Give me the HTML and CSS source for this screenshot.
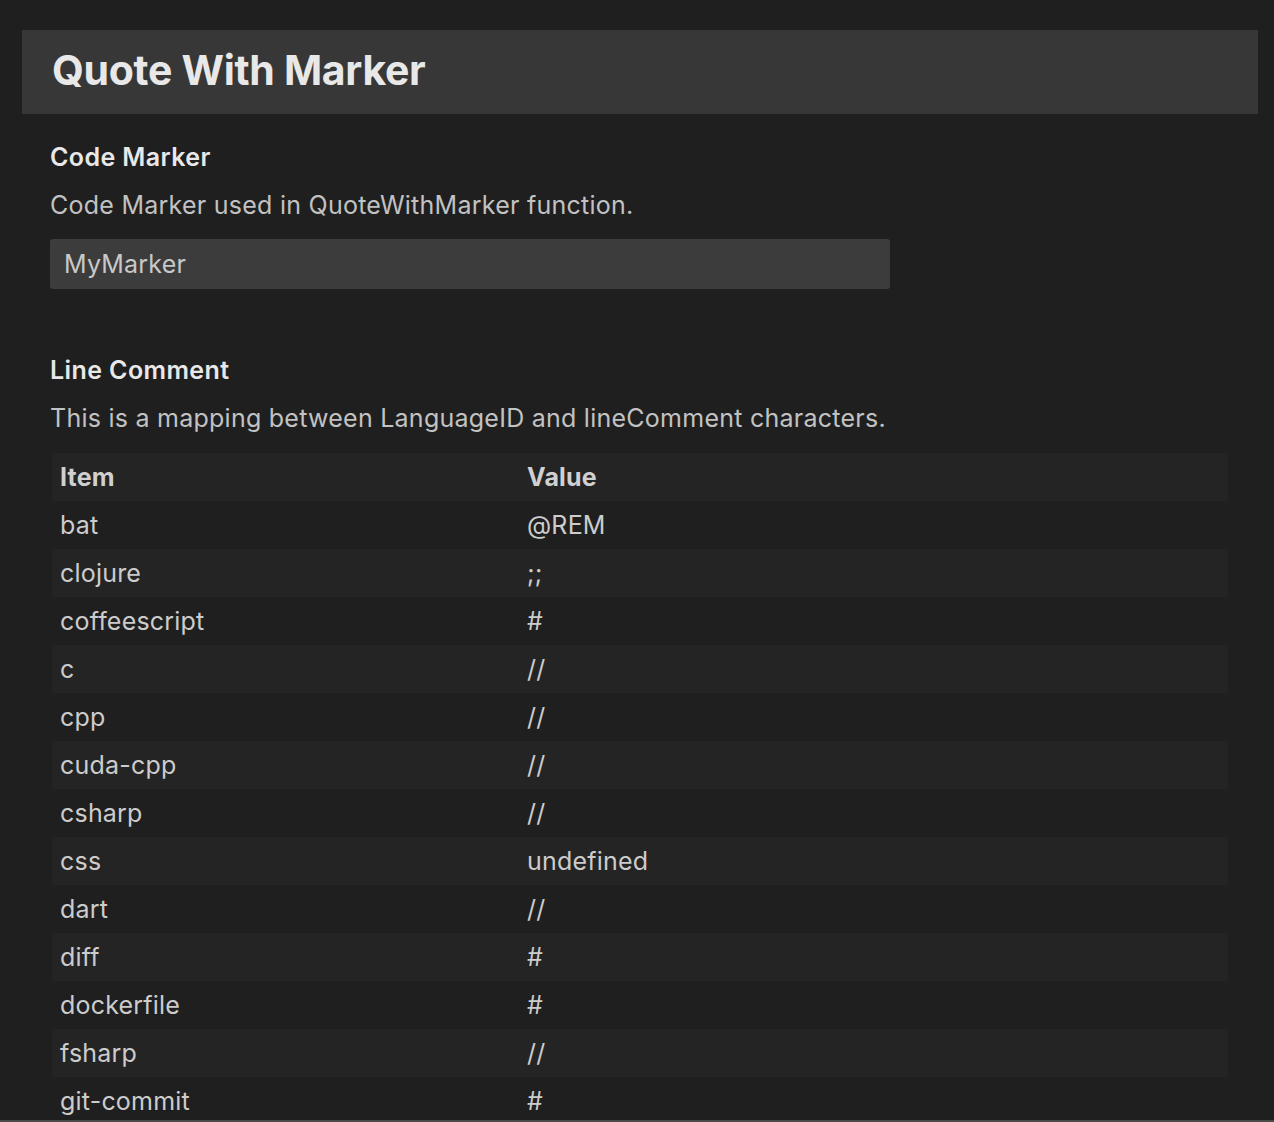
FILE: index.html
```html
<!DOCTYPE html>
<html>
<head>
<meta charset="utf-8">
<link rel="stylesheet" href="styles.css">
</head>
<body>
<div class="page">
  <header class="title-bar"><h1 class="title">Quote With Marker</h1></header>
  <section class="setting">
    <h2 class="setting-name">Code Marker</h2>
    <p class="setting-desc">Code Marker used in QuoteWithMarker function.</p>
    <div class="input">MyMarker</div>
  </section>
  <section class="setting second">
    <h2 class="setting-name">Line Comment</h2>
    <p class="setting-desc">This is a mapping between LanguageID and lineComment characters.</p>
    <table class="map">
      <thead><tr><th class="col-item">Item</th><th>Value</th></tr></thead>
      <tbody>
        <tr><td>bat</td><td>@REM</td></tr>
        <tr><td>clojure</td><td>;;</td></tr>
        <tr><td>coffeescript</td><td>#</td></tr>
        <tr><td>c</td><td>//</td></tr>
        <tr><td>cpp</td><td>//</td></tr>
        <tr><td>cuda-cpp</td><td>//</td></tr>
        <tr><td>csharp</td><td>//</td></tr>
        <tr><td>css</td><td>undefined</td></tr>
        <tr><td>dart</td><td>//</td></tr>
        <tr><td>diff</td><td>#</td></tr>
        <tr><td>dockerfile</td><td>#</td></tr>
        <tr><td>fsharp</td><td>//</td></tr>
        <tr><td>git-commit</td><td>#</td></tr>
      </tbody>
    </table>
  </section>
</div>
<div class="bottom-edge"></div>
</body>
</html>
```
FILE: styles.css
```css
html, body {
  margin: 0;
  padding: 0;
  background: #1f1f1f;
}
body {
  font-family: Inter, "Noto Sans", sans-serif;
  color: #cccccc;
  height: 1122px;
  overflow: hidden;
}
.page {
  padding: 30px 16px 0 22px;
}
.title-bar {
  background: #373737;
  height: 84px;
  display: flex;
  align-items: center;
  padding-left: 30px;
  padding-bottom: 4px;
  box-sizing: border-box;
}
.title {
  margin: 0;
  font-size: 41px;
  font-weight: 700;
  color: #e8e8e8;
  letter-spacing: -0.3px;
}
.setting {
  padding-left: 28px;
  padding-top: 26px;
}
.setting.second {
  padding-top: 64px;
}
.setting-name {
  margin: 0;
  font-size: 25px;
  font-weight: 600;
  color: #e8e8e8;
  line-height: 34px;
  letter-spacing: 0.4px;
}
.setting-desc {
  margin: 14px 0 0;
  font-size: 25px;
  line-height: 34px;
  color: #c2c2c2;
  letter-spacing: 0.25px;
}
.input {
  margin-top: 17px;
  width: 826px;
  height: 50px;
  background: #3c3c3c;
  border-radius: 3px;
  padding-left: 14px;
  display: flex;
  align-items: center;
  font-size: 25px;
  letter-spacing: 0.2px;
  color: #c8c8c8;
}
.map {
  margin: 18px 0 0 2px;
  width: 1176px;
  border-collapse: collapse;
  font-size: 25px;
  letter-spacing: 0.2px;
  color: #cccccc;
}
.map th, .map td {
  height: 48px;
  padding: 0 8px;
  text-align: left;
  vertical-align: middle;
}
.map th {
  font-weight: 700;
  color: #d0d0d0;
}
.col-item {
  width: 451px;
}
.map thead tr,
.map tbody tr:nth-child(even) {
  background: #242424;
}
.bottom-edge {
  position: fixed;
  left: 0;
  right: 0;
  bottom: 0;
  height: 2px;
  background: #4a4a4a;
}
```
